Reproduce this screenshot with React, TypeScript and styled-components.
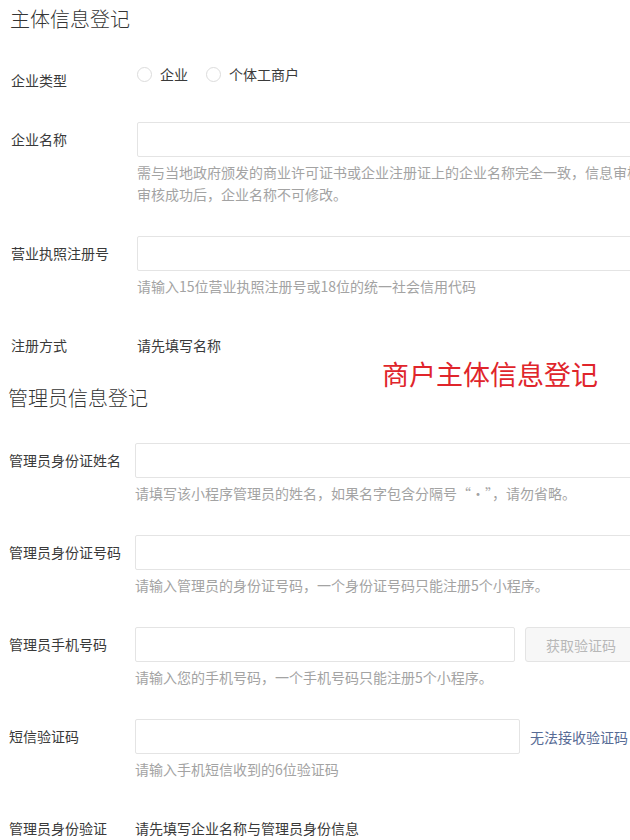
import styled, { createGlobalStyle } from 'styled-components'

const GlobalStyle = createGlobalStyle`
  html, body {
    margin: 0;
    padding: 0;
    background: #fff;
    overflow: hidden;
  }
  body {
    font-family: "Noto Sans CJK SC", "Noto Sans", sans-serif;
    color: #3a3a3a;
    font-size: 14px;
  }
`

type FieldProps = {
  label: string
  help?: string[]
  children: React.ReactNode
}

const Field = ({ label, help, children }: FieldProps) => (
  <FieldRow>
    <Label>{label}</Label>
    <Control>
      <ControlLine>{children}</ControlLine>
      {help && (
        <Help>
          {help.map((line) => (
            <HelpLine key={line}>{line}</HelpLine>
          ))}
        </Help>
      )}
    </Control>
  </FieldRow>
)

const App = () => {
  return (
    <>
      <GlobalStyle />
      <Page>
        <Section $indent={11}>
          <Title>主体信息登记</Title>
          <RadioRow>
            <RadioLabel>企业类型</RadioLabel>
            <RadioGroup>
              <RadioOption>
                <RadioDot />
                企业
              </RadioOption>
              <RadioOption>
                <RadioDot />
                个体工商户
              </RadioOption>
            </RadioGroup>
          </RadioRow>
          <Field
            label="企业名称"
            help={[
              '需与当地政府颁发的商业许可证书或企业注册证上的企业名称完全一致，信息审核',
              '审核成功后，企业名称不可修改。',
            ]}
          >
            <Input />
          </Field>
          <Field label="营业执照注册号" help={['请输入15位营业执照注册号或18位的统一社会信用代码']}>
            <Input />
          </Field>
          <StaticRow>
            <Label $plain>注册方式</Label>
            <Value>请先填写名称</Value>
          </StaticRow>
        </Section>

        <Section $indent={9}>
          <Title>管理员信息登记</Title>
          <Field label="管理员身份证姓名" help={['请填写该小程序管理员的姓名，如果名字包含分隔号“·”，请勿省略。']}>
            <Input />
          </Field>
          <Field label="管理员身份证号码" help={['请输入管理员的身份证号码，一个身份证号码只能注册5个小程序。']}>
            <Input />
          </Field>
          <Field label="管理员手机号码" help={['请输入您的手机号码，一个手机号码只能注册5个小程序。']}>
            <Input $width={380} />
            <CodeButton disabled>获取验证码</CodeButton>
          </Field>
          <Field label="短信验证码" help={['请输入手机短信收到的6位验证码']}>
            <Input $width={385} />
            <Link>无法接收验证码</Link>
          </Field>
          <StaticRow>
            <Label $plain>管理员身份验证</Label>
            <Value>请先填写企业名称与管理员身份信息</Value>
          </StaticRow>
        </Section>

        <Annotation>商户主体信息登记</Annotation>
      </Page>
    </>
  )
}

export default App

const Page = styled.div`
  position: relative;
  width: 630px;
  height: 840px;
  overflow: hidden;
  padding-top: 5px;
  box-sizing: border-box;
`

const Section = styled.section<{ $indent: number }>`
  padding-left: ${(p) => p.$indent}px;
  & + & {
    margin-top: 29px;
  }
`

const Title = styled.h2`
  margin: 0 0 31px -1px;
  font-size: 20px;
  line-height: 28px;
  font-weight: 300;
  color: #353535;
`

const RadioRow = styled.div`
  display: flex;
  align-items: flex-start;
  margin-bottom: 32px;
`

const RadioLabel = styled.div`
  width: 126px;
  flex: none;
  padding-top: 6px;
  line-height: 20px;
`

const RadioGroup = styled.div`
  display: flex;
  gap: 18px;
  line-height: 20px;
`

const RadioOption = styled.label`
  display: flex;
  align-items: center;
  gap: 8px;
`

const RadioDot = styled.span`
  width: 15px;
  height: 15px;
  box-sizing: border-box;
  border: 1px solid #dcdcdc;
  border-radius: 50%;
  background: #fff;
`

const FieldRow = styled.div`
  display: flex;
  align-items: flex-start;
  margin-bottom: 31px;
`

const Label = styled.div<{ $plain?: boolean }>`
  width: 126px;
  flex: none;
  line-height: ${(p) => (p.$plain ? '20px' : '35px')};
  white-space: nowrap;
`

const Control = styled.div`
  flex: none;
  width: 560px;
`

const ControlLine = styled.div`
  display: flex;
  align-items: center;
  gap: 10px;
`

const Input = styled.input<{ $width?: number }>`
  width: ${(p) => (p.$width ? `${p.$width}px` : '100%')};
  height: 35px;
  box-sizing: border-box;
  border: 1px solid #e4e4e4;
  border-radius: 2px;
  background: #fff;
  outline: none;
  padding: 0 10px;
  font: inherit;
`

const CodeButton = styled.button`
  flex: none;
  width: 112px;
  height: 35px;
  box-sizing: border-box;
  border: 1px solid #e4e4e4;
  border-radius: 3px;
  background: #f7f7f7;
  color: #b8b8b8;
  font: inherit;
  padding: 0;
`

const Link = styled.a`
  flex: none;
  color: #576b95;
  white-space: nowrap;
  cursor: pointer;
`

const Help = styled.div`
  width: 510px;
  margin-top: 4px;
  color: #a3a3a3;
  line-height: 22px;
`

const HelpLine = styled.div`
  white-space: nowrap;
`

const StaticRow = styled.div`
  display: flex;
  margin-top: 38px;
`

const Value = styled.div`
  line-height: 20px;
`

const Annotation = styled.div`
  position: absolute;
  left: 382px;
  top: 358px;
  font-size: 27px;
  line-height: 32px;
  color: #e0252b;
  white-space: nowrap;
`
